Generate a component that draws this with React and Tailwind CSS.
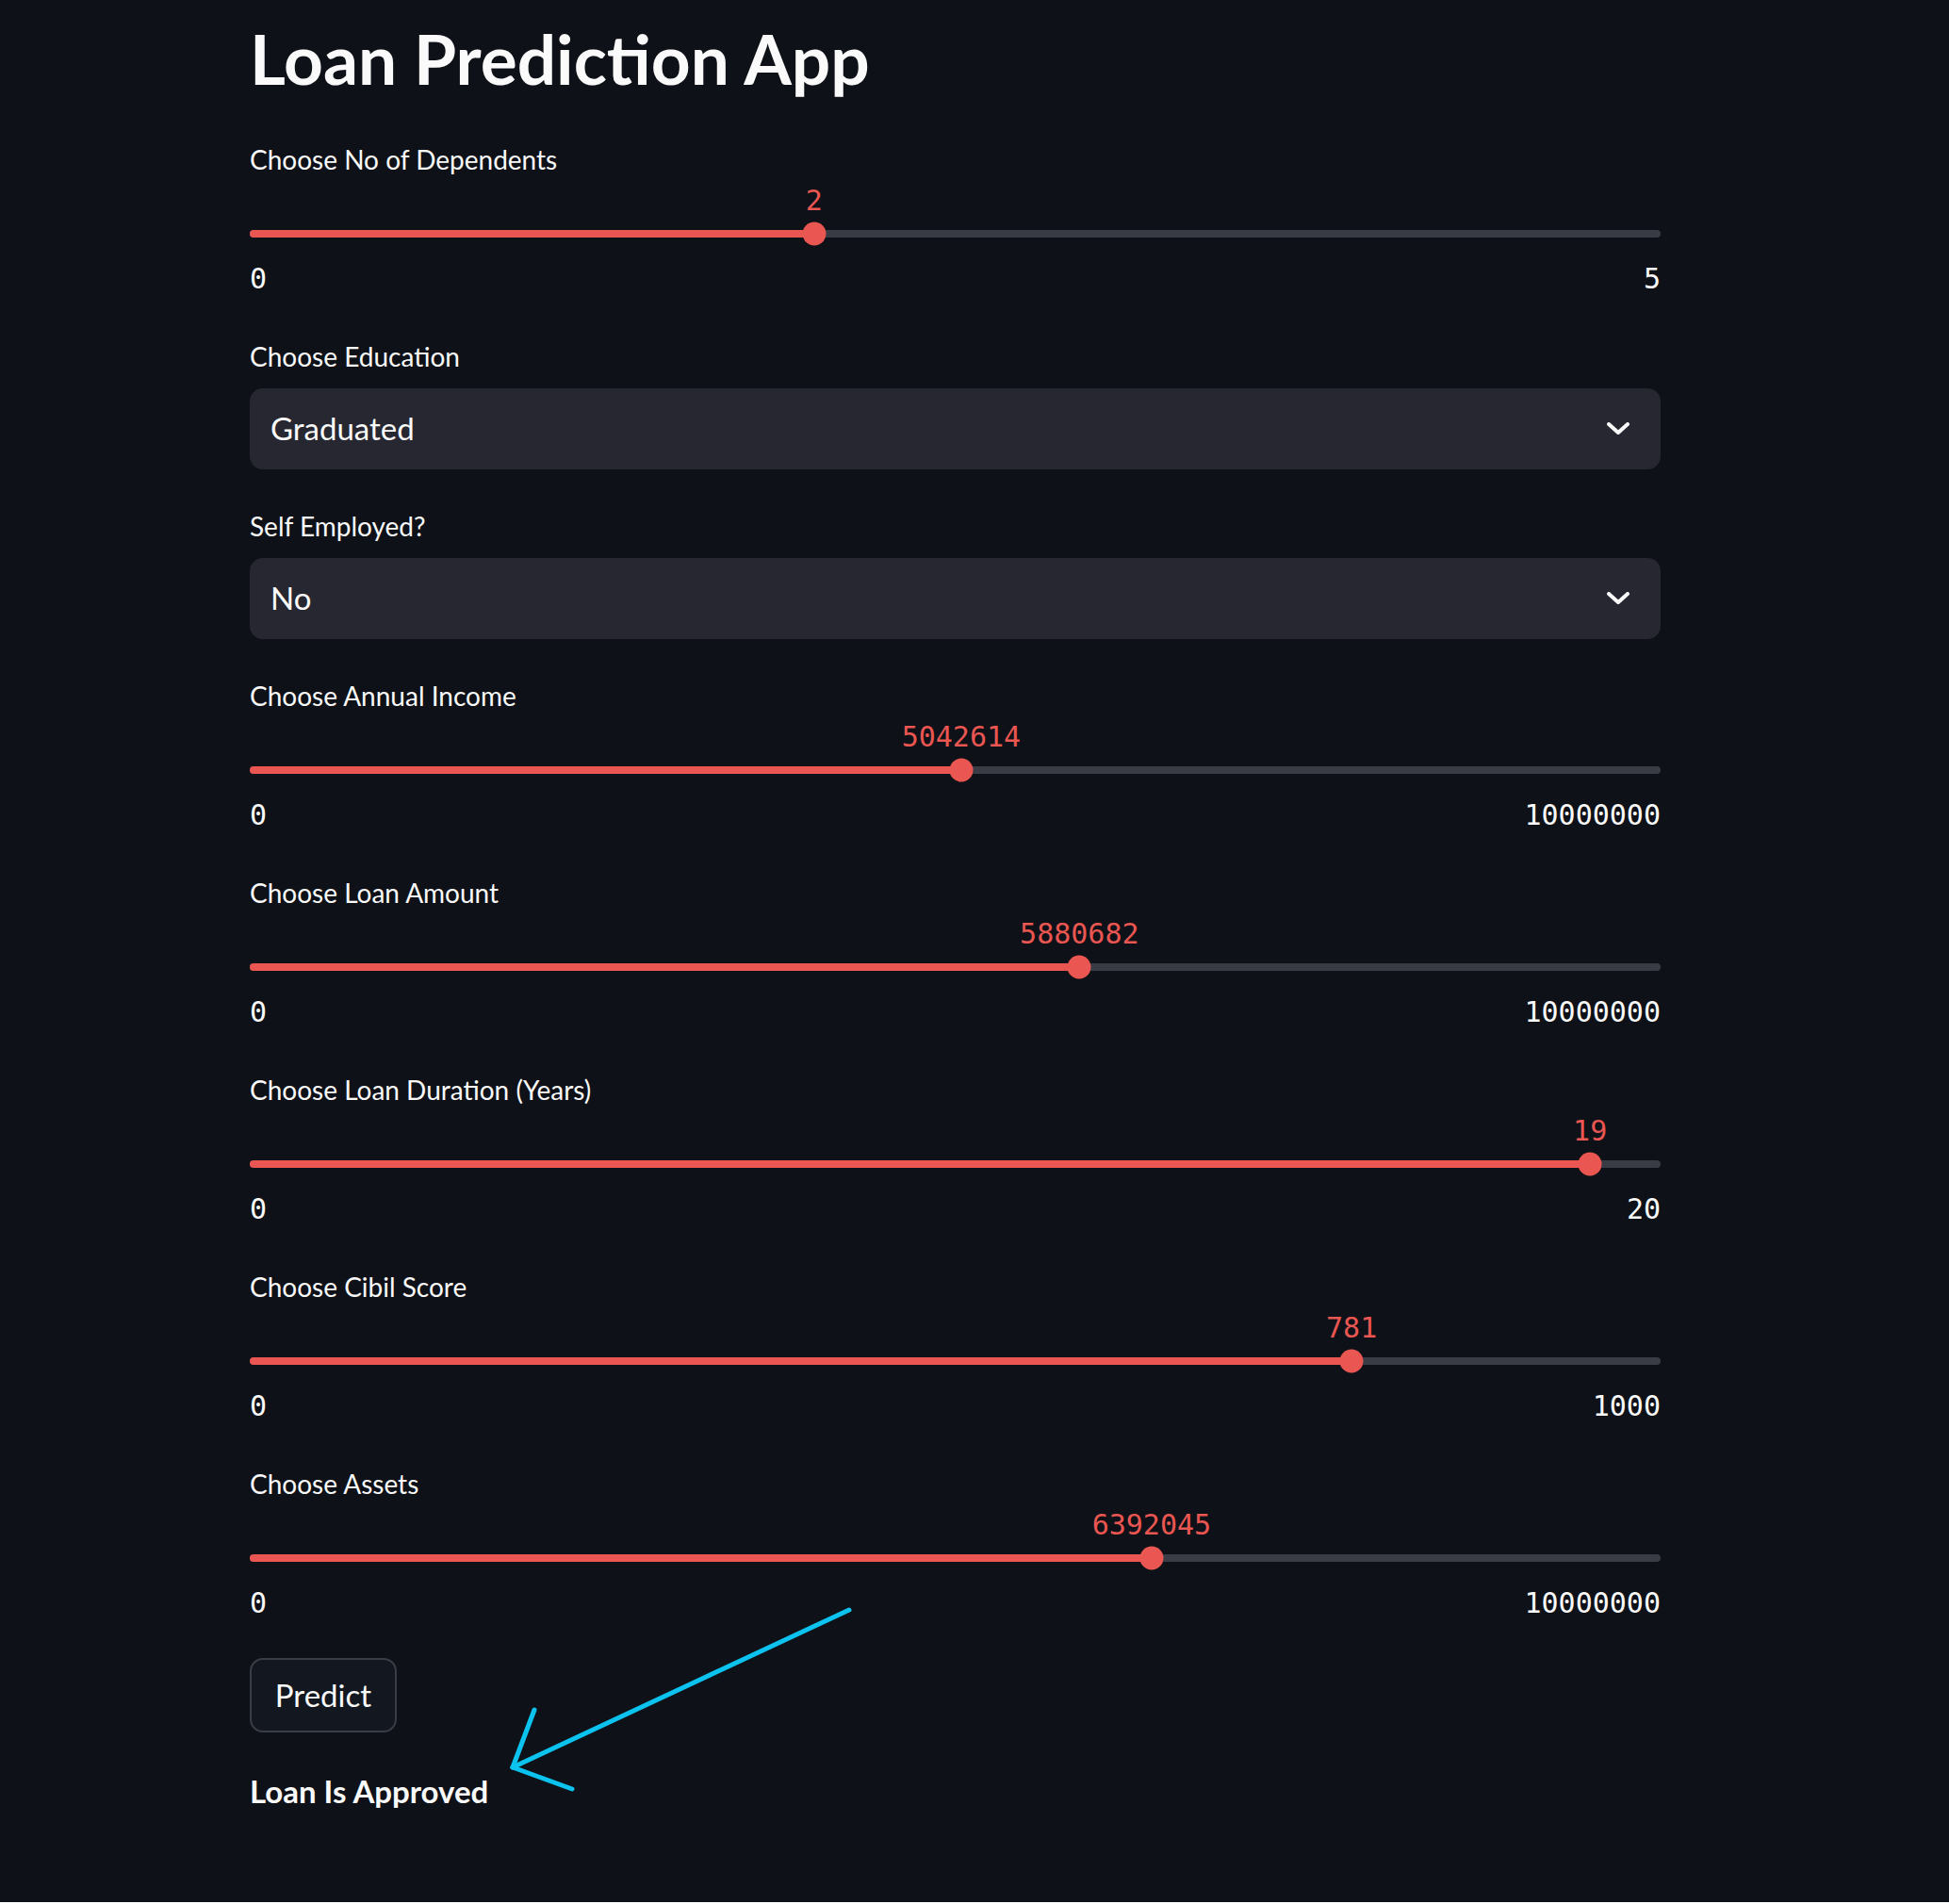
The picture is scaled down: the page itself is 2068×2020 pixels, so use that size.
import React from "react";

const RED = "bg-[#ea5651]";

function Slider({ label, value, min, max }) {
  const frac = (value - min) / (max - min);
  const pct = `${frac * 100}%`;
  return (
    <div className="flex flex-col mb-[26px]">
      <div className="h-[40px] leading-[40px] text-[28px] text-[#fafafa]">{label}</div>
      <div className="relative h-[48px]">
        <div
          className="absolute top-0 h-[48px] leading-[48px] -translate-x-1/2 text-[30px] text-[#ea5651] font-['DejaVu_Sans_Mono',monospace] whitespace-nowrap"
          style={{ left: pct }}
        >
          {value}
        </div>
      </div>
      <div className="h-[21px] flex items-center">
        <div className="relative h-[8px] w-full rounded-full bg-[#3a3c45]">
          <div className={`h-full rounded-full ${RED}`} style={{ width: pct }} />
          <div
            className={`absolute top-1/2 -translate-y-1/2 -translate-x-1/2 w-[25px] h-[25px] rounded-full ${RED}`}
            style={{ left: pct }}
          />
        </div>
      </div>
      <div className="h-[74px] flex items-center justify-between text-[30px] text-[#fafafa] font-['DejaVu_Sans_Mono',monospace]">
        <span>{min}</span>
        <span>{max}</span>
      </div>
    </div>
  );
}

function Chevron() {
  return (
    <svg width="24" height="14" viewBox="0 0 24 14" fill="none">
      <polyline points="2,2 12,11 22,2" stroke="#fafafa" strokeWidth="4" strokeLinecap="round" strokeLinejoin="round" />
    </svg>
  );
}

function SelectBox({ label, value }) {
  return (
    <div className="flex flex-col mb-[40px]">
      <div className="h-[40px] leading-[40px] text-[28px] text-[#fafafa]">{label}</div>
      <div className="mt-[14px] h-[86px] rounded-[14px] bg-[#262730] flex items-center justify-between pl-[22px] pr-[33px]">
        <span className="text-[33px] text-[#fafafa]">{value}</span>
        <Chevron />
      </div>
    </div>
  );
}

export default function App() {
  return (
    <div className="relative w-[2068px] h-[2018px] bg-[#0e1117] overflow-hidden font-['Lato',sans-serif]">
      <div className="ml-[265px] w-[1497px] flex flex-col">
        <h1 className="h-[124px] leading-[124px] text-[73px] font-bold text-[#fafafa] mb-[25px]">
          Loan Prediction App
        </h1>
        <Slider label="Choose No of Dependents" value={2} min={0} max={5} />
        <SelectBox label="Choose Education" value="Graduated" />
        <SelectBox label="Self Employed?" value="No" />
        <Slider label="Choose Annual Income" value={5042614} min={0} max={10000000} />
        <Slider label="Choose Loan Amount" value={5880682} min={0} max={10000000} />
        <Slider label="Choose Loan Duration (Years)" value={19} min={0} max={20} />
        <Slider label="Choose Cibil Score" value={781} min={0} max={1000} />
        <Slider label="Choose Assets" value={6392045} min={0} max={10000000} />
        <div className="-mt-[4px]">
          <button className="w-[156px] h-[79px] rounded-[14px] border-2 border-[#3a3d46] bg-[#131720] text-[33px] text-[#fafafa]">
            Predict
          </button>
        </div>
        <div className="mt-[42px] h-[40px] leading-[40px] text-[33px] font-bold text-[#fafafa]">
          Loan Is Approved
        </div>
      </div>
      <svg
        className="absolute top-0 left-0 pointer-events-none"
        width="2068"
        height="2020"
        viewBox="0 0 2068 2020"
        fill="none"
      >
        <g stroke="#0bc3ee" strokeWidth="5" strokeLinecap="round" strokeLinejoin="round">
          <line x1="901" y1="1708" x2="544" y2="1875" />
          <line x1="544" y1="1875" x2="567" y2="1814" />
          <line x1="544" y1="1875" x2="607" y2="1898" />
        </g>
      </svg>
    </div>
  );
}
